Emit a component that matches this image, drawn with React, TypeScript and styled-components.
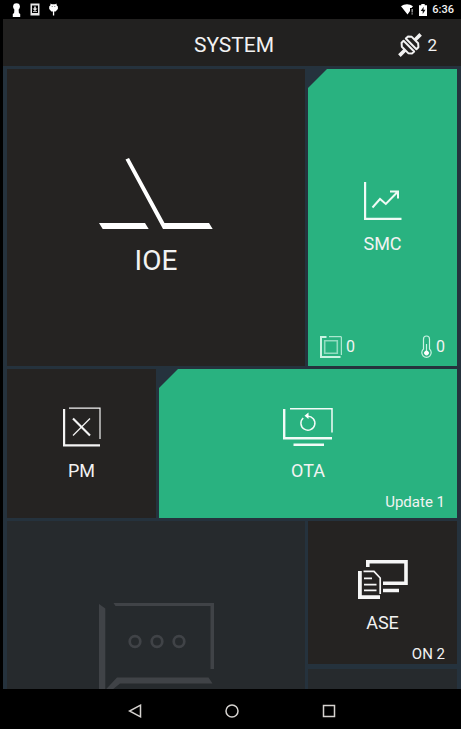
import React from "react";
import styled, { createGlobalStyle } from "styled-components";

const GlobalStyle = createGlobalStyle`
  * { box-sizing: border-box; }
  body { margin: 0; background: #000; }
  button { font: inherit; color: inherit; border: 0; padding: 0; cursor: pointer; }
  svg { display: block; flex: none; }
`;

const Screen = styled.div`
  display: flex;
  flex-direction: column;
  height: 100vh;
  overflow: hidden;
  background: #000;
  color: #f2f2f2;
  font-family: Roboto, "Liberation Sans", sans-serif;
`;

const StatusBar = styled.div`
  display: flex;
  flex: none;
  justify-content: space-between;
  align-items: center;
  height: 19px;
  padding: 0 7px 0 12px;
`;

const StatusGroup = styled.div<{ $gap: number }>`
  display: flex;
  align-items: center;
  gap: ${(p) => p.$gap}px;
`;

const Clock = styled.time`
  font-size: 11px;
  line-height: 16px;
  font-weight: 500;
`;

const Header = styled.header`
  display: grid;
  flex: none;
  grid-template-columns: 1fr auto 1fr;
  align-items: center;
  height: 47px;
  margin-left: 3px;
  padding: 4px 24px 0 28px;
  background: #222120;
`;

const Title = styled.h1`
  grid-column: 2;
  margin: 0;
  font-size: 21px;
  line-height: 28px;
  font-weight: 400;
`;

const Connections = styled.button`
  display: flex;
  justify-self: end;
  align-items: center;
  gap: 5px;
  background: none;
  font-size: 17px;
  line-height: 24px;
`;

const Board = styled.main`
  display: grid;
  flex: 1;
  min-height: 0;
  overflow: hidden;
  grid-template-columns: 149fr 146fr 149fr;
  grid-template-rows: minmax(297px, auto) minmax(149px, auto) auto;
  gap: 3px;
  margin-left: 3px;
  padding: 3px 4px 0;
  background: #25323d;
`;

const tones = { dark: "#252322", green: "#29b280", muted: "#262a2d" };

const Tile = styled.button<{ $tone: keyof typeof tones; $span?: number; $cut?: boolean; $low?: boolean }>`
  display: grid;
  grid-template-rows: 1fr auto 1fr;
  grid-column: span ${(p) => p.$span ?? 1};
  padding: ${(p) => (p.$low ? "10px 12px 1px" : "9px 12px 7px")};
  background: ${(p) => tones[p.$tone]};
  clip-path: ${(p) => (p.$cut ? "polygon(19px 0, 100% 0, 100% 100%, 0 100%, 0 19px)" : "none")};
`;

const TileBody = styled.span<{ $large?: boolean }>`
  display: flex;
  grid-row: 2;
  flex-direction: column;
  align-items: center;
  gap: ${(p) => (p.$large ? 14 : 12)}px;
`;

const Label = styled.span<{ $large?: boolean }>`
  font-size: ${(p) => (p.$large ? 28 : 18)}px;
  line-height: ${(p) => (p.$large ? 36 : 24)}px;
`;

const Footer = styled.span<{ $spread?: boolean }>`
  display: flex;
  grid-row: 3;
  align-self: end;
  align-items: center;
  justify-content: ${(p) => (p.$spread ? "space-between" : "flex-end")};
  font-size: 15px;
  line-height: 18px;
`;

const Reading = styled.span`
  display: flex;
  align-items: center;
  gap: 4px;
  font-size: 16px;
  line-height: 24px;
`;

const MessagesTile = styled.button`
  display: flex;
  grid-column: span 2;
  justify-content: center;
  align-items: flex-start;
  min-height: 298px;
  padding-top: 82px;
  background: ${tones.muted};
`;

const SideColumn = styled.div`
  display: grid;
  grid-template-rows: 143px 149px;
  gap: 5px;
`;

const EmptyTile = styled.div`
  background: ${tones.muted};
`;

const NavBar = styled.nav`
  display: flex;
  flex: none;
  justify-content: center;
  align-items: center;
  gap: 11%;
  height: 40px;
  padding: 4px 0 0 3px;
`;

const NavButton = styled.button`
  display: flex;
  justify-content: center;
  align-items: center;
  width: 47px;
  height: 32px;
  background: none;
`;

const KeyholeIcon = () => (
  <svg width="9" height="14" viewBox="0 0 9 14" fill="#fff">
    <circle cx="4.5" cy="3.6" r="3.4" />
    <path d="M2.500 5h4l.4 5 1.300 1v3H.8v-3l1.300-1z" />
  </svg>
);

const DownloadIcon = () => (
  <svg width="10" height="13" viewBox="0 0 10 13">
    <path fillRule="evenodd" fill="#e8e8e8" d="M.5.500h9v12h-9zM2 2.500v7.500h6V2.500z" />
    <path fill="#e8e8e8" d="M4.200 3.500h1.600v2H7.500L5 8 2.500 5.500h1.700zM3 8.300h4v.8H3z" />
  </svg>
);

const BugIcon = () => (
  <svg width="9" height="13" viewBox="0 0 9 13" fill="#fff">
    <path d="M1.500.500 2.800 1.300h3.400L7.500.500l.2 1.800 1.200 1.200v2.500L6.600 8.500H2.400L.2 6v-2.500l1.200-1.200z" />
    <path d="M3.900 7.500h1.300V12.500H3.900z" />
    <path d="M2.700 3h1v.9h-1zM5.300 3h1v.9h-1z" fill="#777" />
  </svg>
);

const WifiIcon = () => (
  <svg width="13" height="11" viewBox="0 0 13 11" fill="#fff">
    <path d="M0 2.300C3.300-.4 8.700-.4 12 2.300L10.500 4H9v3L6.500 10.500z" />
    <path d="M10.500 5h1.300v3.500h-1.300zM10.500 9.300h1.300v1.300h-1.300z" fill="#aaa" />
  </svg>
);

const BatteryIcon = () => (
  <svg width="8" height="12" viewBox="0 0 8 12">
    <path fill="#fff" d="M2.300 0h3.400v1.300H8V12H0V1.300h2.300z" />
    <path fill="#111" d="M4.700 2.800 1.700 7h2v3l2.800-4.300h-2z" />
  </svg>
);

const PlugIcon = () => (
  <svg width="24" height="24" viewBox="0 0 24 24" fill="none" stroke="#f2f2f2">
    <g transform="rotate(-45 12 12)">
      <path strokeWidth="3.600" d="M-3 12H5M19 12h8" />
      <path
        strokeWidth="2"
        strokeLinejoin="round"
        d="M10.400 4.500H7.600L5 7.500v9l2.600 3h2.800zM13.600 4.500h2.800l2.600 3v9l-2.600 3h-2.800z"
      />
    </g>
  </svg>
);

const SwitchIcon = () => (
  <svg width="114" height="71" viewBox="0 0 114 71" fill="#fff">
    <path d="M0 65H46L49.700 71H3.700zM26.500 1.500 30 0 65.500 65H110L113.700 71H64z" />
  </svg>
);

const ChartIcon = () => (
  <svg width="38" height="38" viewBox="0 0 38 38" fill="none" stroke="#effaf5">
    <path strokeWidth="2.200" d="M1.100 0V36.900H37.500" />
    <path strokeWidth="2" d="M8.500 25.500 16 17 21.800 22 33.500 10M26 9.500h8V16.500" />
  </svg>
);

const ChipIcon = () => (
  <svg width="22" height="22" viewBox="0 0 22 22" fill="none" stroke="#c9f3e2">
    <path strokeWidth="2" d="M6.500 1H1V21H20.500" />
    <path strokeWidth="1" d="M9 .700H21.300V19" />
    <path strokeWidth="1.600" strokeOpacity=".65" d="M4.700 4.700H17.300V17.300H4.700z" />
  </svg>
);

const ThermometerIcon = () => (
  <svg width="11" height="24" viewBox="0 0 11 24" fill="none" stroke="#c9f3e2">
    <path strokeWidth="1.200" d="M2.500 14V4a3 3 0 0 1 6 0v10a4.700 4.700 0 1 1-6 0z" />
    <path strokeWidth="1.200" d="M5.500 9v8" />
    <circle cx="5.500" cy="18" r="2" fill="#fff" stroke="#fff" />
  </svg>
);

const CrossPanelIcon = () => (
  <svg width="38" height="40" viewBox="0 0 38 40" fill="none" stroke="#f4f4f4">
    <path strokeWidth="2.200" d="M1.100 2V38.400H37" />
    <path strokeWidth="1.200" d="M6 1.200H37V32" />
    <path strokeWidth="2.200" d="M10 11.500 27 28.500" />
    <path strokeWidth="1.200" d="M27 11.500 10 28.500" />
  </svg>
);

const UpdateIcon = () => (
  <svg width="50" height="40" viewBox="0 0 50 40" fill="none" stroke="#f2fbf7">
    <path strokeWidth="2.400" d="M1.200 2V31.300H49M10.500 37.800H41" />
    <path strokeWidth="1.500" d="M7 1.700H49V25.500" />
    <path strokeWidth="1.500" d="M20.200 11A7 7 0 1 0 24.500 9.200" />
    <path fill="#fff" stroke="none" d="M25.500 5.500v6.500L21.500 8.700z" />
  </svg>
);

const DocumentsIcon = () => (
  <svg width="50" height="39" viewBox="0 0 50 39" fill="none" stroke="#f6f6f6">
    <path strokeWidth="3.600" d="M9.800 7V1.800H48V23.300H25M25 30.500H41" />
    <path strokeWidth="3.800" d="M1.900 11V37.100H22" />
    <path strokeWidth="1.700" d="M5.500 11.300H16L22.200 18V34M6 18.300h8M6 24.700H18.500M6 30.400H18.500" />
  </svg>
);

const MessageIcon = () => (
  <svg width="115" height="114" viewBox="0 0 115 114" fill="#404347">
    <path d="M0 1 6.300 5.500V114H0zM14.500 0H115V66H111.500V3H16.500zM18 74.500H109.500L113.500 80.500H21L6.300 92.500V87z" />
    <g fill="none" stroke="#404347" strokeWidth="2.700">
      <circle cx="36" cy="38.500" r="5.300" />
      <circle cx="58" cy="38.500" r="5.300" />
      <circle cx="80" cy="38.500" r="5.300" />
    </g>
  </svg>
);

const NavIcon = ({ d }: { d: string }) => (
  <svg width="14" height="14" viewBox="0 0 14 14" fill="none" stroke="#d6d3d0" strokeWidth="1.500">
    <path d={d} />
  </svg>
);

const navItems = [
  { name: "Back", d: "M12.500 1.200V12.800L1.500 7z" },
  { name: "Home", d: "M1 7a6 6 0 1 1 12 0a6 6 0 1 1-12 0z" },
  { name: "Recent apps", d: "M1.500 1.500h11v11h-11z" },
];

export default function App() {
  return (
    <Screen>
      <GlobalStyle />
      <StatusBar>
        <StatusGroup $gap={9}>
          <KeyholeIcon />
          <DownloadIcon />
          <BugIcon />
        </StatusGroup>
        <StatusGroup $gap={5}>
          <WifiIcon />
          <BatteryIcon />
          <Clock>6:36</Clock>
        </StatusGroup>
      </StatusBar>
      <Header>
        <Title>SYSTEM</Title>
        <Connections>
          <PlugIcon />
          <span>2</span>
        </Connections>
      </Header>
      <Board>
        <Tile $tone="dark" $span={2}>
          <TileBody $large>
            <SwitchIcon />
            <Label $large>IOE</Label>
          </TileBody>
        </Tile>
        <Tile $tone="green" $cut>
          <TileBody>
            <ChartIcon />
            <Label>SMC</Label>
          </TileBody>
          <Footer $spread>
            <Reading>
              <ChipIcon />
              <span>0</span>
            </Reading>
            <Reading>
              <ThermometerIcon />
              <span>0</span>
            </Reading>
          </Footer>
        </Tile>
        <Tile $tone="dark">
          <TileBody>
            <CrossPanelIcon />
            <Label>PM</Label>
          </TileBody>
        </Tile>
        <Tile $tone="green" $span={2} $cut>
          <TileBody>
            <UpdateIcon />
            <Label>OTA</Label>
          </TileBody>
          <Footer>Update 1</Footer>
        </Tile>
        <MessagesTile aria-label="Messages">
          <MessageIcon />
        </MessagesTile>
        <SideColumn>
          <Tile $tone="dark" $low>
            <TileBody>
              <DocumentsIcon />
              <Label>ASE</Label>
            </TileBody>
            <Footer>ON 2</Footer>
          </Tile>
          <EmptyTile />
        </SideColumn>
      </Board>
      <NavBar>
        {navItems.map((item) => (
          <NavButton key={item.name} aria-label={item.name}>
            <NavIcon d={item.d} />
          </NavButton>
        ))}
      </NavBar>
    </Screen>
  );
}
